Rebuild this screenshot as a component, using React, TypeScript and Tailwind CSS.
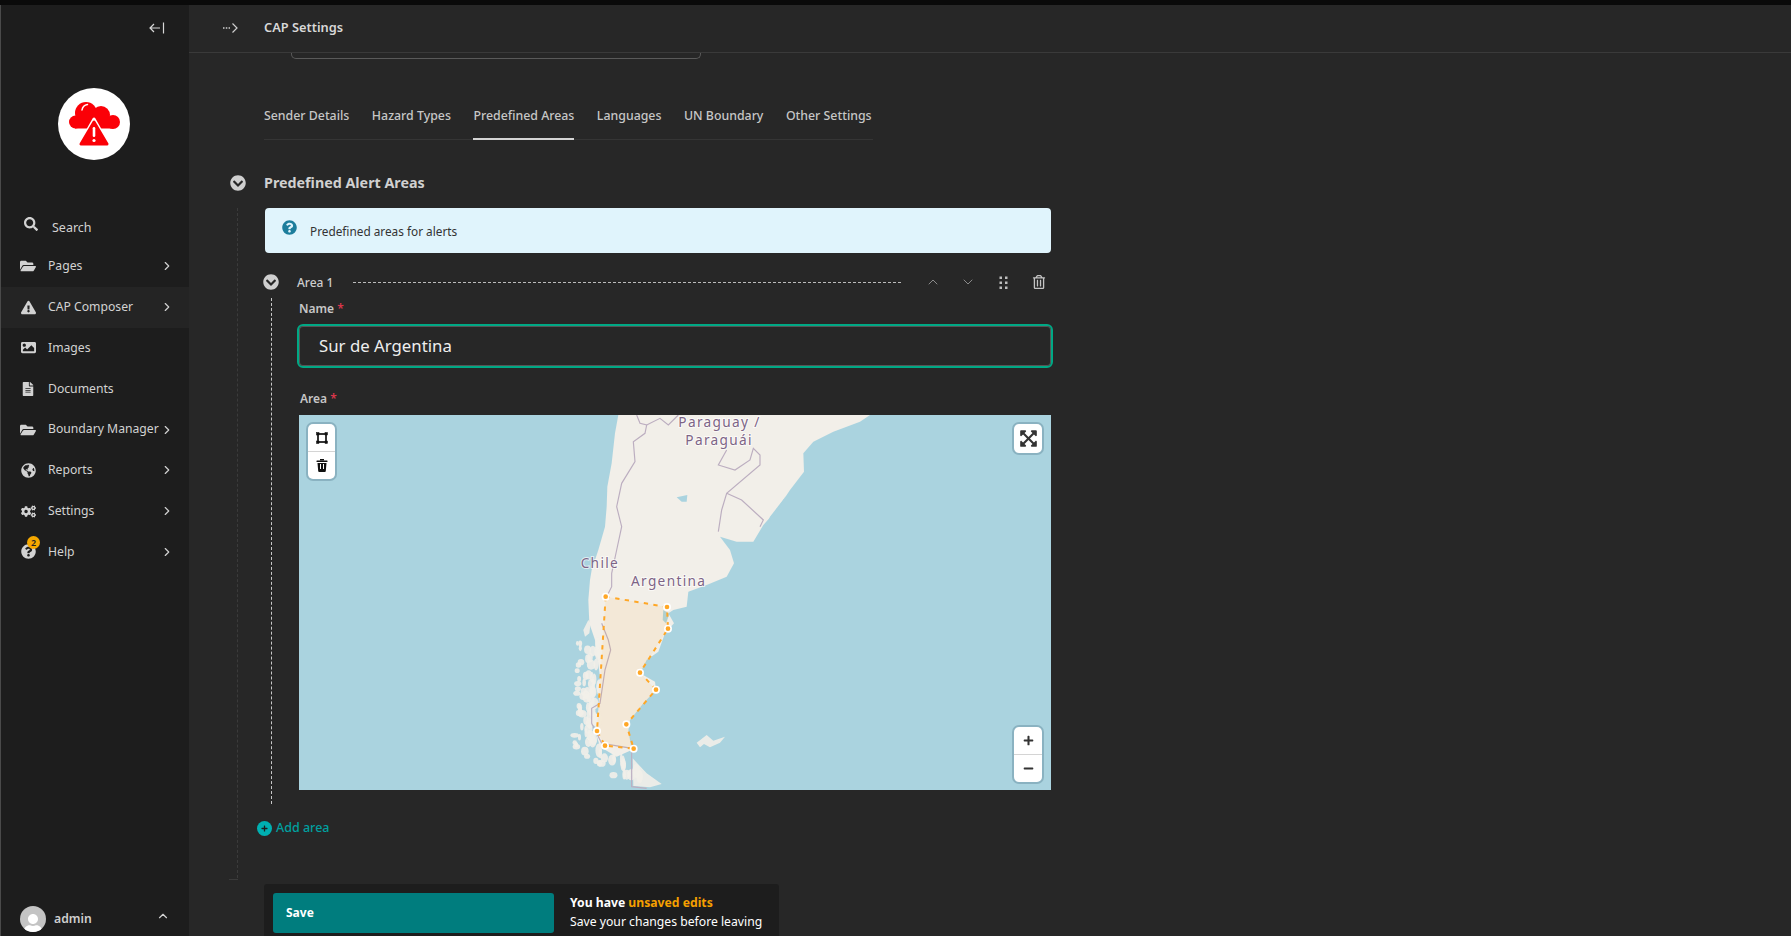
import React from "react";
import {
  FaSearch, FaFolderOpen, FaExclamationTriangle, FaImage, FaFileAlt, FaGlobeAmericas, FaCogs,
  FaQuestionCircle, FaChevronCircleDown, FaRegTrashAlt, FaExpandArrowsAlt, FaPlus, FaMinus, FaUser,
} from "react-icons/fa";
import { ChevronRight, ChevronUp, ChevronDown } from "lucide-react";

function Logo() {
  return (
    <svg width="72" height="72" viewBox="0 0 72 72">
      <circle cx="36" cy="36" r="36" fill="#fff" />
      <g fill="#fb0007">
        <circle cx="28" cy="25" r="11" />
        <circle cx="43" cy="27" r="9" />
        <circle cx="17.5" cy="34" r="6.5" />
        <circle cx="55" cy="34" r="7" />
        <rect x="17" y="30" width="38" height="10.5" />
      </g>
      <path d="M24 22c.5-3 2.500-5 5.500-5.500" stroke="#fff" strokeWidth="1.500" fill="none" strokeLinecap="round" />
      <polygon points="36,31 20,59 52,59" fill="#fff" stroke="#fff" strokeWidth="3" strokeLinejoin="round" />
      <polygon points="36,34 23,56 49,56" fill="#fb0007" stroke="#fb0007" strokeWidth="3" strokeLinejoin="round" />
      <rect x="34.700" y="39" width="2.600" height="10" rx="1.300" fill="#fff" />
      <circle cx="36" cy="52.500" r="1.600" fill="#fff" />
    </svg>
  );
}

const nav = [
  { label: "Pages", icon: <FaFolderOpen size={16} />, chevron: true },
  { label: "CAP Composer", icon: <FaExclamationTriangle size={15} />, chevron: true, active: true },
  { label: "Images", icon: <FaImage size={15} /> },
  { label: "Documents", icon: <FaFileAlt size={14} /> },
  { label: "Boundary Manager", icon: <FaFolderOpen size={16} />, chevron: true },
  { label: "Reports", icon: <FaGlobeAmericas size={15} />, chevron: true },
  { label: "Settings", icon: <FaCogs size={15} />, chevron: true },
  { label: "Help", icon: <FaQuestionCircle size={15} />, chevron: true, badge: true },
];

function Sidebar() {
  return (
    <aside className="flex w-[189px] shrink-0 flex-col border-l border-[#4a4a4a] bg-[#1d1d1d] text-[#d2d2d2]">
      <div className="flex h-[47px] justify-end pr-[24px] pt-[16px]">
        <svg width="16" height="14" viewBox="0 0 16 14" fill="none" stroke="#d8d8d8" strokeWidth="1.200">
          <path d="M1 7h10M5 3 1 7l4 4M14.500 1.500v11" />
        </svg>
      </div>
      <div className="ml-[57px] mt-[36px]">
        <Logo />
      </div>
      <div className="mt-[55px] flex h-[26px] items-center pl-[23px]">
        <FaSearch size={14} className="-mt-[8px]" />
        <span className="ml-[14px] text-[12.500px]">Search</span>
      </div>
      <nav className="mt-[5px] flex flex-col">
        {nav.map((n) => (
          <div
            key={n.label}
            className={`flex h-[40.800px] items-center pl-[19px] pr-[15px] ${n.active ? "bg-[#242424]" : ""}`}
          >
            <span className="relative flex w-[16px] justify-center">
              {n.icon}
              {n.badge && (
                <span className="absolute -right-[4px] -top-[8px] flex h-[13px] w-[13px] items-center justify-center rounded-full bg-[#f5a800] text-[9px] font-semibold leading-none text-[#222]">
                  2
                </span>
              )}
            </span>
            <span className="ml-[12px] whitespace-nowrap text-[12.200px]">{n.label}</span>
            {n.chevron && <ChevronRight size={14} className="ml-auto" strokeWidth={2} />}
          </div>
        ))}
      </nav>
      <div className="mt-auto flex h-[34px] items-center pl-[19px]">
        <span className="flex h-[26px] w-[26px] items-end justify-center overflow-hidden rounded-full bg-[#c4c4c4] text-white">
          <FaUser size={20} className="-mb-[2px]" />
        </span>
        <span className="ml-[8px] text-[12.200px] font-semibold text-[#cfcfcf]">admin</span>
        <ChevronUp size={14} strokeWidth={2} className="-mt-[6px] ml-[64px]" />
      </div>
    </aside>
  );
}

const areaPts: [number, number][] = [
  [167, 560], [351, 591], [354, 656], [270, 788], [318, 839], [229, 943], [251, 1016], [165, 1007], [141, 963],
];

const frags = Array.from({ length: 90 }, (_, i) => {
  const a = Math.abs(Math.sin(i * 12.9898) * 43758.5453) % 1;
  const b = Math.abs(Math.sin(i * 78.233) * 12543.123) % 1;
  const c = Math.abs(Math.sin(i * 37.719) * 9871.77) % 1;
  const y = 700 + b * 400;
  const left = y < 1030 ? 72 + (1030 - y) * 0.03 : 95 + (y - 1030) * 1.2;
  const width = y < 1030 ? 75 : 100;
  return { cx: left + a * width, cy: y, rx: 4 + c * 9, ry: 7 + a * 14 };
});

function MapArt() {
  return (
    <svg className="block h-full w-full" viewBox="0 0 752 375">
      <defs>
        <filter id="soft" x="-5%" y="-5%" width="110%" height="110%">
          <feGaussianBlur stdDeviation="0.600" />
        </filter>
      </defs>
      <rect width="752" height="375" fill="#aad3df" />
      <g transform="translate(251,-5) scale(0.33333)">
        <g filter="url(#soft)">
          <polygon
            fill="#f2efe9"
            points="205,15 195,70 185,160 172,230 170,290 165,350 145,420 125,480 120,510 115,570 118,640 135,690 150,800 145,900 135,960 150,1010 200,1040 245,1020 235,960 240,930 280,880 318,840 315,815 270,790 290,750 325,725 345,670 372,640 355,610 370,600 410,590 415,545 470,525 530,500 552,460 540,420 510,380 560,395 610,395 640,345 680,300 720,240 762,185 760,130 790,95 850,65 930,35 960,15"
          />
          <g fill="#f2efe9" fillOpacity="0.9">
            {frags.map((f, i) => (
              <ellipse key={i} cx={f.cx} cy={f.cy} rx={f.rx} ry={f.ry} />
            ))}
            <polygon points="100,660 115,630 122,640 118,670 105,680" />
            <polygon points="248,1045 290,1090 335,1122 300,1132 250,1128" />
            <polygon points="440,998 470,975 490,992 525,980 510,998 480,1012 462,1002 450,1012" />
          </g>
          <polygon points="340,600 358,612 348,640 338,630" fill="#aad3df" />
          <polygon points="380,262 412,255 410,275 395,275" fill="#aad3df" />
          <polygon points="660,320 708,258 690,295 650,345" fill="#aad3df" />
          <g fill="none" stroke="#bcaec0" strokeWidth="3.500">
            <polyline points="260,15 270,40 290,45 285,70 250,95 255,155 215,220 200,290 215,350 200,420 185,490 185,530 165,570" />
            <polyline points="155,640 175,690 182,720 165,780 150,880 125,895 125,940 155,1000 245,1015 245,1130 290,1135" />
            <polyline points="290,45 330,25 355,45 385,15" />
            <polyline points="530,120 505,165 555,180 600,150 610,115 630,135 630,165 530,250 515,300 505,365" />
            <polyline points="530,250 575,270 640,330 630,350" />
          </g>
        </g>
        <polygon
          points={areaPts.map((p) => p.join(",")).join(" ")}
          fill="#ffa726"
          fillOpacity="0.09"
          stroke="#ffa726"
          strokeWidth="6"
          strokeDasharray="13 16"
        />
        {areaPts.map((p, i) => (
          <circle key={i} cx={p[0]} cy={p[1]} r="9.500" fill="#ffa726" stroke="#fff" strokeWidth="5" />
        ))}
        <g
          fill="#7d6486"
          stroke="#fff"
          strokeOpacity="0.650"
          strokeWidth="6"
          style={{ paintOrder: "stroke" }}
          fontFamily="'Noto Sans', sans-serif"
          fontSize="41"
          letterSpacing="4"
        >
          <text x="385" y="52">Paraguay /</text>
          <text x="406" y="104">Paraguái</text>
          <text x="92" y="475">Chile</text>
          <text x="243" y="529">Argentina</text>
        </g>
      </g>
    </svg>
  );
}

function DragDots() {
  return (
    <svg width="9" height="13" viewBox="0 0 9 13" fill="#bdbdbd">
      <rect x="0.500" y="0.500" width="2.500" height="2.500" />
      <rect x="6" y="0.500" width="2.500" height="2.500" />
      <rect x="0.500" y="5.500" width="2.500" height="2.500" />
      <rect x="6" y="5.500" width="2.500" height="2.500" />
      <rect x="0.500" y="10.500" width="2.500" height="2.500" />
      <rect x="6" y="10.500" width="2.500" height="2.500" />
    </svg>
  );
}

function MapBtn({ className, children }: { className?: string; children: React.ReactNode }) {
  return <div className={`flex items-center justify-center ${className ?? ""}`}>{children}</div>;
}

const tabs = ["Sender Details", "Hazard Types", "Predefined Areas", "Languages", "UN Boundary", "Other Settings"];

export default function App() {
  return (
    <div className="flex h-screen w-full flex-col overflow-hidden bg-[#272727] font-['Noto_Sans',sans-serif]">
      <div className="h-[5px] shrink-0 bg-[#0a0a0a]" />
      <div className="flex min-h-0 flex-1">
        <Sidebar />
        <main className="flex min-w-0 flex-1 flex-col">
          <header className="flex h-[48px] shrink-0 items-center border-b border-[#3a3a3a] pb-[2px] pl-[33px]">
            <svg width="16" height="12" viewBox="0 0 16 12" fill="none" stroke="#d0d0d0">
              <path d="M10.500 1.500 15 6l-4.500 4.500" strokeWidth="1.200" />
              <path d="M1 6h7" strokeWidth="1.500" strokeDasharray="1.500 1.300" />
            </svg>
            <span className="ml-[26px] text-[12.800px] font-semibold text-[#d8d8d8]">CAP Settings</span>
          </header>
          <div className="min-h-0 flex-1 overflow-hidden">
            <div className="ml-[102px] h-[6px] w-[410px] rounded-b-[5px] border-x border-b border-[#5a5a5a]" />
            <div className="ml-[75px] mt-[36px] flex h-[45px] w-[609px] gap-[22.500px] border-b border-[#353535] text-[12.350px] font-medium text-[#c6c6c6]">
              {tabs.map((t) => (
                <div
                  key={t}
                  className={`flex h-[45px] items-start whitespace-nowrap pt-[12px] ${t === "Predefined Areas" ? "border-b-2 border-[#d4d4d4]" : ""}`}
                >
                  {t}
                </div>
              ))}
            </div>
            <div className="ml-[41px] mt-[32px] flex h-[22px] items-center">
              <FaChevronCircleDown size={16} className="text-[#cfcfcf]" />
              <h2 className="ml-[18px] text-[14.300px] font-bold text-[#d0d0d0]">Predefined Alert Areas</h2>
            </div>
            <div className="relative ml-[48px] mt-[14px] w-[814px] border-l border-dashed border-transparent pb-[47px]">
              <div className="absolute -left-[1px] top-0 h-[670px] border-l border-dashed border-[#3b3b3b]" />
              <div className="absolute -left-[9px] top-[671px] h-px w-[9px] bg-[#3b3b3b]" />
              <div className="ml-[27px] flex h-[45px] w-[786px] items-start rounded-[4px] bg-[#e0f4fc] pl-[17px] pt-[12px]">
                <FaQuestionCircle size={15} className="text-[#1c7d9c]" />
                <span className="ml-[13px] mt-[3px] text-[11.800px] leading-[17px] text-[#333]">Predefined areas for alerts</span>
              </div>
              <div className="ml-[25px] mt-[20px] flex h-[18px] items-center">
                <FaChevronCircleDown size={16} className="text-[#cfcfcf]" />
                <span className="ml-[18px] mt-[1px] w-[56px] text-[12px] font-medium text-[#cdcdcd]">Area 1</span>
                <div className="w-[548px] border-t border-dashed border-[#bbbbbb]" />
                <ChevronUp size={16} strokeWidth={1.500} className="ml-[24px] text-[#8a8a8a]" />
                <ChevronDown size={16} strokeWidth={1.500} className="ml-[19px] text-[#8a8a8a]" />
                <span className="ml-[23px] flex">
                  <DragDots />
                </span>
                <FaRegTrashAlt size={14} className="ml-[24px] text-[#c4c4c4]" />
              </div>
              <div className="relative ml-[33px]">
                <div className="absolute -left-[0.500px] top-[7px] h-[506px] border-l border-dashed border-[#c8c8c8]" />
                <div className="pl-[26px]">
                  <div className="pl-[2px] pt-[9px] text-[12px] font-semibold leading-[17px] text-[#c6c6c6]">
                    Name <span className="text-[#d9364a]">*</span>
                  </div>
                  <div className="mt-[7px] flex h-[44px] w-[756px] items-center rounded-[6px] border-2 border-[#00a885] pb-[1px] pl-[20px] text-[16.800px] text-[#eeeeee] shadow-[inset_0_0_0_1px_#555]">
                    Sur de Argentina
                  </div>
                  <div className="pl-[3px] pt-[22px] text-[12px] font-semibold leading-[17px] text-[#c6c6c6]">
                    Area <span className="text-[#d9364a]">*</span>
                  </div>
                  <div className="relative ml-[2px] mt-[8px] h-[375px] w-[752px] overflow-hidden">
                    <MapArt />
                    <div className="absolute left-[9px] top-[9px] w-[27px] rounded-[5px] bg-white shadow-[0_0_0_2px_rgba(130,170,185,.8)]">
                      <MapBtn className="h-[28px] border-b border-[#d4d4d4]">
                        <svg width="12" height="12" viewBox="0 0 12 12" fill="none" stroke="#111" strokeWidth="1.700">
                          <rect x="2" y="2" width="8" height="8" />
                          <rect x="0.500" y="0.500" width="2.500" height="2.500" fill="#111" strokeWidth="0.500" />
                          <rect x="9" y="0.500" width="2.500" height="2.500" fill="#111" strokeWidth="0.500" />
                          <rect x="0.500" y="9" width="2.500" height="2.500" fill="#111" strokeWidth="0.500" />
                          <rect x="9" y="9" width="2.500" height="2.500" fill="#111" strokeWidth="0.500" />
                        </svg>
                      </MapBtn>
                      <MapBtn className="h-[27px]">
                        <svg width="12" height="13" viewBox="0 0 12 13" fill="#111">
                          <rect x="0.500" y="1.500" width="11" height="1.500" rx="0.500" />
                          <rect x="4" y="0" width="4" height="1.500" />
                          <path d="M1.500 4h9l-.7 8a1 1 0 0 1-1 1H3.200a1 1 0 0 1-1-1z" />
                          <path d="M4.500 5v5M7.500 5v5" stroke="#fff" strokeWidth="1" />
                        </svg>
                      </MapBtn>
                    </div>
                    <MapBtn className="absolute right-[9px] top-[9px] h-[29px] w-[28px] rounded-[5px] bg-white text-[#333] shadow-[0_0_0_2px_rgba(130,170,185,.8)]">
                      <FaExpandArrowsAlt size={19} />
                    </MapBtn>
                    <div className="absolute bottom-[8px] right-[9px] w-[28px] rounded-[5px] bg-white text-[#333] shadow-[0_0_0_2px_rgba(130,170,185,.8)]">
                      <MapBtn className="h-[28px] border-b border-[#d4d4d4]">
                        <FaPlus size={11} />
                      </MapBtn>
                      <MapBtn className="h-[27px]">
                        <FaMinus size={11} />
                      </MapBtn>
                    </div>
                  </div>
                </div>
              </div>
              <div className="ml-[19px] mt-[29px] flex h-[18px] items-center text-[12.500px] font-medium text-[#00a0a0]">
                <span className="flex h-[15px] w-[15px] items-center justify-center rounded-full bg-[#00b0b1] text-[#1d1d1d]">
                  <FaPlus size={7} />
                </span>
                <span className="ml-[4px]">Add area</span>
              </div>
            </div>
            <div className="ml-[75px] flex h-[60px] w-[515px] rounded-t-[3px] bg-[#1d1d1d] pl-[9px] pt-[9px]">
              <div className="flex h-[40px] w-[281px] items-center rounded-[3px] bg-[#007d7e] pl-[13px] text-[12px] font-bold text-white">
                Save
              </div>
              <div className="ml-[16px] flex flex-col text-[12.200px] leading-[19px] text-white">
                <span className="font-bold">
                  You have <span className="text-[#f5a000]">unsaved edits</span>
                </span>
                <span>Save your changes before leaving</span>
              </div>
            </div>
          </div>
        </main>
      </div>
    </div>
  );
}
